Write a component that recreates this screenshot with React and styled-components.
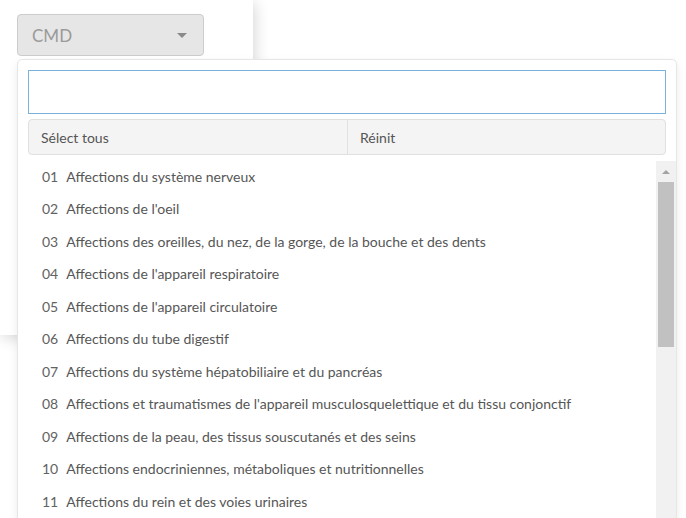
import styled, { createGlobalStyle } from "styled-components";

const GlobalStyle = createGlobalStyle`
	html, body {
		margin: 0;
		padding: 0;
		background: #ffffff;
		font-family: Lato, "Open Sans", "Liberation Sans", sans-serif;
		color: #555555;
	}
`;

const CMD_LIST = [
	["01", "Affections du système nerveux"],
	["02", "Affections de l'oeil"],
	["03", "Affections des oreilles, du nez, de la gorge, de la bouche et des dents"],
	["04", "Affections de l'appareil respiratoire"],
	["05", "Affections de l'appareil circulatoire"],
	["06", "Affections du tube digestif"],
	["07", "Affections du système hépatobiliaire et du pancréas"],
	["08", "Affections et traumatismes de l'appareil musculosquelettique et du tissu conjonctif"],
	["09", "Affections de la peau, des tissus souscutanés et des seins"],
	["10", "Affections endocriniennes, métaboliques et nutritionnelles"],
	["11", "Affections du rein et des voies urinaires"],
	["12", "Affections de l'appareil génital masculin"],
	["13", "Affections de l'appareil génital féminin"],
	["14", "Grossesses pathologiques, accouchements et affections du post-partum"],
	["15", "Nouveau-nés, prématurés et affections de la période périnatale"],
	["16", "Affections du sang et des organes hématopoïétiques"],
	["17", "Affections myéloprolifératives et tumeurs de siège imprécis ou diffus"],
	["18", "Maladies infectieuses et parasitaires"],
	["19", "Maladies et troubles mentaux"],
	["20", "Troubles mentaux organiques liés à l'absorption de drogues ou induits par celles-ci"],
	["21", "Traumatismes, allergies et empoisonnements"],
	["22", "Brûlures"],
	["23", "Facteurs influant sur l'état de santé et autres motifs de recours aux services de santé"],
	["25", "Maladies dues à une infection par le VIH"],
	["26", "Traumatismes multiples graves"],
	["27", "Transplantations d'organes"],
	["28", "Séances"],
	["90", "Erreurs et autres séjours inclassables"],
];

const ROW_HEIGHT = 32.5;
const LIST_HEIGHT = 400;
const ARROW_HEIGHT = 21;

const Page = styled.div`
	position: relative;
	width: 686px;
	height: 518px;
	overflow: hidden;
`;

const Card = styled.div`
	width: 253px;
	height: 335px;
	background: #ffffff;
	box-shadow: 2px 3px 14px rgba(0, 0, 0, 0.16);
	padding: 14px 0 0 17px;
	box-sizing: border-box;
`;

const SelectButton = styled.button`
	display: flex;
	align-items: center;
	justify-content: space-between;
	width: 187px;
	height: 42px;
	padding: 0 16px 0 14px;
	box-sizing: border-box;
	background: #e6e6e6;
	border: 1px solid #cccccc;
	border-radius: 4px;
	font-family: inherit;
	font-size: 17px;
	color: #9a9a9a;
	cursor: pointer;
`;

const Caret = styled.span`
	width: 0;
	height: 0;
	border-left: 5px solid transparent;
	border-right: 5px solid transparent;
	border-top: 5px solid #8a8a8a;
`;

const Menu = styled.div`
	position: absolute;
	top: 59px;
	left: 17px;
	width: 660px;
	box-sizing: border-box;
	background: #ffffff;
	border: 1px solid #e6e6e6;
	border-radius: 5px;
	box-shadow: 0 4px 10px rgba(0, 0, 0, 0.08);
	padding-top: 10px;
`;

const Search = styled.input`
	display: block;
	margin: 0 10px;
	width: calc(100% - 20px);
	height: 44px;
	box-sizing: border-box;
	border: 1px solid #79b3dc;
	outline: none;
	font-family: inherit;
	font-size: 14px;
	padding: 0 10px;
`;

const Actions = styled.div`
	display: grid;
	grid-template-columns: 1fr 1fr;
	margin: 5px 10px 0;
	height: 36px;
	box-sizing: border-box;
	border: 1px solid #e0e0e0;
	border-radius: 4px;
	background: #f4f4f4;
	overflow: hidden;
`;

const ActionButton = styled.button`
	border: none;
	border-left: ${(p) => (p.$divider ? "1px solid #e0e0e0" : "none")};
	background: transparent;
	text-align: left;
	padding: 0 12px;
	font-family: inherit;
	font-size: 14px;
	color: #555555;
	cursor: pointer;
`;

const ListArea = styled.div`
	display: flex;
	margin-top: 6px;
	height: ${LIST_HEIGHT}px;
`;

const List = styled.ul`
	flex: 1;
	list-style: none;
	margin: -1px 0 0;
	padding: 0;
	overflow: hidden;
`;

const Item = styled.li`
	display: flex;
	align-items: center;
	gap: 8px;
	height: ${ROW_HEIGHT}px;
	padding: 0 24px;
	font-size: 14px;
	color: #565656;
	white-space: nowrap;
	cursor: pointer;
`;

const Code = styled.span`
	color: #626262;
`;

const Scrollbar = styled.div`
	display: flex;
	flex-direction: column;
	width: 20px;
	background: #f1f1f1;
`;

const ScrollArrow = styled.div`
	display: flex;
	align-items: center;
	justify-content: center;
	height: ${ARROW_HEIGHT}px;
	flex-shrink: 0;
`;

const ArrowUp = styled.span`
	width: 0;
	height: 0;
	border-left: 4px solid transparent;
	border-right: 4px solid transparent;
	border-bottom: 4px solid #a3a3a3;
`;

const ArrowDown = styled.span`
	width: 0;
	height: 0;
	border-left: 4px solid transparent;
	border-right: 4px solid transparent;
	border-top: 4px solid #a3a3a3;
`;

const Track = styled.div`
	flex: 1;
	padding: 0 2px;
`;

const Thumb = styled.div`
	background: #c1c1c1;
`;

export default function App() {
	const track = LIST_HEIGHT - ARROW_HEIGHT * 2;
	const thumbHeight = Math.round((track * LIST_HEIGHT) / (CMD_LIST.length * ROW_HEIGHT) + 8);

	return (
		<Page>
			<GlobalStyle />
			<Card>
				<SelectButton>
					CMD
					<Caret />
				</SelectButton>
			</Card>
			<Menu>
				<Search type="text" />
				<Actions>
					<ActionButton>Sélect tous</ActionButton>
					<ActionButton $divider>Réinit</ActionButton>
				</Actions>
				<ListArea>
					<List>
						{CMD_LIST.map(([code, label]) => (
							<Item key={code}>
								<Code>{code}</Code>
								{label}
							</Item>
						))}
					</List>
					<Scrollbar>
						<ScrollArrow>
							<ArrowUp />
						</ScrollArrow>
						<Track>
							<Thumb style={{ height: thumbHeight }} />
						</Track>
						<ScrollArrow>
							<ArrowDown />
						</ScrollArrow>
					</Scrollbar>
				</ListArea>
			</Menu>
		</Page>
	);
}
